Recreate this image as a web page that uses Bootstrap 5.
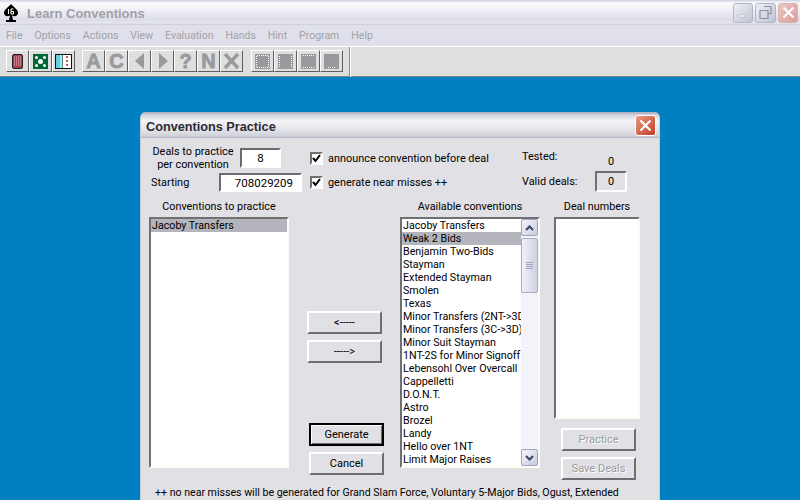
<!DOCTYPE html>
<html lang="en">
<head>
<meta charset="utf-8">
<title>Learn Conventions</title>
<link href="https://cdn.jsdelivr.net/npm/bootstrap@5.3.0/dist/css/bootstrap.min.css" rel="stylesheet">
<style>
html,body{height:500px;overflow:hidden;margin:0;background:#0080c0}
body{font-family:Roboto,"Liberation Sans",Arial,sans-serif;font-size:10.9px;color:#000;line-height:13px}
.app{width:800px;height:500px}
.titlebar{height:25px;background:linear-gradient(#cfd0e0 0,#fafafd 3px,#f3f3f8 8px,#dddde8 20px,#e6e6ee 23px,#c8c8d8 25px);padding:0 2px 0 1px}
.apptitle{font-family:"Liberation Sans",sans-serif;font-weight:700;font-size:13px;color:#a0a0a8;margin:2px 0 0 6px}
.winbtn{width:20px;height:20px;border:1px solid #b4b6c8;border-radius:3px;background:linear-gradient(135deg,#f0f1f6,#bfc2d2);margin-left:2px}
.winbtn.wide{width:21px}
.winbtn.cl{background:linear-gradient(135deg,#ecc4c0,#dc9c98);border-color:#d8b4b4}
.menubar{height:20px;background:#dfe0ea;color:#a2a2a8;padding-left:6px;gap:12px;font-size:10.5px}
.menuline{height:2px;background:#fff;border-top:1px solid #dfe0ea}
.toolbar{height:30px;background:#e0dfe0;border-bottom:1px solid #7d8588;padding-left:6px}
.toolgroup{margin-top:-1px}
.tb{width:23px;height:22px;background:#dfdfdf;border:1px solid;border-color:#fff #5f5f5f #5f5f5f #fff;display:flex;align-items:center;justify-content:center;font-family:"Liberation Sans",sans-serif;font-weight:700;font-size:20px;-webkit-text-stroke:.8px #9a9a9e;color:#9a9a9e;overflow:hidden;line-height:1}
.gapa{margin-left:7px}
.gapb{margin-left:8px}
.tsep{width:2px;height:30px;background:linear-gradient(90deg,#8a8a8a 50%,#fff 50%);margin-left:6px}
.desktop{height:423px;margin:0 2px 0 1px;background:#0080c0;position:relative}
.dlg{position:absolute;left:139px;top:35px;width:520px;height:400px;background:#e1e0e5;border:1px solid #c8cad8;border-top:0;border-radius:6px 6px 0 0;overflow:hidden}
.dlgtitle{height:26px;background:linear-gradient(#a8a9bc 0,#d2d3de 3px,#f4f4f8 9px,#e2e2e8 18px,#d2d2da 24px,#aeb0c0 26px);padding:0 3px 0 5px;font-family:"Liberation Sans",sans-serif;font-weight:700;font-size:12.7px;color:#2c2c34}
.dlgtitle>span{margin-top:5px}
.dlgx{width:21px;height:21px;border:1px solid #fff;border-radius:3px;background:linear-gradient(135deg,#e89a86,#c23c26);margin-top:1px}
.dlgbody{padding:9px 0 0 8px}
.toprow{height:53px}
.dealbox{width:88px;text-align:center}
.fld.form-control{border-radius:0;border:2px solid;border-color:#6c6c6c #fff #fff #6c6c6c;padding:0 3px;height:20px;font-size:11.5px;background:#fff;line-height:16px;color:#000;box-shadow:none}
.f8{width:41px;text-align:center;margin-left:3px}
.fstart{width:83px;text-align:right;padding-right:7px!important;height:19px!important}
.startlbl{margin-left:2px;width:68px}
.r1{height:22px}
.r2{height:19px;margin-top:4px}
.col1{width:161px}
.col2{width:212px;margin-top:-1px}
.xrow{height:24px;gap:5px}
.cb{width:13px;height:13px;border:2px solid;border-color:#707070 #fff #fff #707070;background:#fff;display:flex;align-items:center;justify-content:center;flex:none}
.stat{width:110px;padding-top:3px}
.statr{height:21px}
.slab{width:73px}
.val{width:32px;height:21px;border:2px solid;border-color:#707070 #fff #fff #707070;text-align:center;line-height:17px}
.v0{width:32px;text-align:center;margin-top:5px}
.heads{height:13px;text-align:center;font-size:10.8px}
.h1a{width:140px}
.h1b{width:140px;margin-left:111px}
.h1c{width:86px;margin-left:14px}
.main{height:264px;margin-top:4px}
.lbox.list-group{border-radius:0;border:2px solid;border-color:#707070 #fcfcf4 #fcfcf4 #707070;background:#fff;overflow:hidden;flex-wrap:nowrap}
.lbox .list-group-item{border:0;border-radius:0;padding:0 0 0 1px;background:transparent;color:#000;font-size:10.7px;line-height:13px;height:13px;white-space:nowrap;overflow:hidden}
.lbox .list-group-item.sel{background:#b4b4bd}
.left{width:140px;height:251px}
.mid{width:111px;height:251px;padding-left:18px}
.ab.btn,.sb.btn{width:75px;height:23px;border-radius:0;padding:0;background:#e1e0e5;font-size:11px;line-height:19px;border:2px solid;border-color:#fff #6e6e6e #6e6e6e #fff;color:#000;opacity:1;--bs-btn-disabled-opacity:1}
.ab.btn{margin-top:94px}
.ab.two.btn{margin-top:6px}
.sb.go.btn{margin:60px 0 6px 2px;border:2px solid #000;box-shadow:inset 1px 1px 0 #fff,inset -1px -1px 0 #6e6e6e}
.sb.can.btn{margin-left:2px}
.avail{width:140px;height:251px;padding-left:0}
.rows{width:121px;overflow:hidden;padding-top:0}
.sbar{width:17px;background:#f3f3fa}
.sbtn{width:17px;height:17px;border:1px solid #9ea3c0;border-radius:2px;background:linear-gradient(135deg,#f4f5fb,#c8cbe0);display:flex;align-items:center;justify-content:center}
.thumb{width:17px;height:55px;margin-top:2px;border:1px solid #a8aac4;border-radius:2px;background:linear-gradient(90deg,#f0f1f8,#cfd1e4);display:flex;align-items:center;justify-content:center}
.right{width:86px;margin-left:14px}
.dn{width:86px;height:202px}
.dis.sb.btn{margin-left:7px;color:#9c9c9c;text-shadow:1px 1px 0 #fff}
.dis1.sb.btn{margin-top:9px}
.dis2.sb.btn{margin-top:6px}
.foot{padding-left:6px;margin-top:5px;white-space:nowrap;font-size:10.6px}
</style>
</head>
<body>
<div class="app">
  <div class="titlebar d-flex align-items-center">
    <svg width="20" height="20" viewBox="0 0 20 20"><path d="M10 1C8 4 3 6 3 10c0 3 3 4 6 2.500L8 17H5v2h10v-2h-3l-1-4.500c3 1.500 6 .5 6-2.500 0-4-5-6-7-9z" fill="#000"/><rect x="6.500" y="5.500" width="7" height="6" fill="#000"/><path d="M7.500 6v5M10 6h2.500M10 6v5h2.500V8.500H10" stroke="#fff" stroke-width="1" fill="none"/></svg>
    <span class="apptitle flex-grow-1">Learn Conventions</span>
    <div class="winbtn d-flex align-items-center justify-content-center"><svg width="13" height="13" viewBox="0 0 13 13"><rect x="1" y="9" width="7" height="2" fill="#fff" stroke="#9a9cb0" stroke-width=".5"/></svg></div>
    <div class="winbtn wide d-flex align-items-center justify-content-center"><svg width="15" height="15" viewBox="0 0 15 15"><path d="M6 1.500h7v7h-3M2 5.500h8v8H2zM2 5.500h8" fill="none" stroke="#8d90a6" stroke-width="1.200"/></svg></div>
    <div class="winbtn cl d-flex align-items-center justify-content-center"><svg width="13" height="13" viewBox="0 0 13 13"><path d="M1.500 1.500l10 10M11.500 1.500l-10 10" stroke="#fff" stroke-width="2.200"/></svg></div>
  </div>
  <div class="menubar d-flex align-items-center">
    <span>File</span><span>Options</span><span>Actions</span><span>View</span><span>Evaluation</span><span>Hands</span><span>Hint</span><span>Program</span><span>Help</span>
  </div>
  <div class="menuline"></div>
  <div class="toolbar d-flex align-items-center">
    <div class="tb toolgroup"><svg width="11" height="15" viewBox="0 0 11 15"><rect x=".5" y=".5" width="10" height="14" rx="1.500" fill="#b03a50" stroke="#222"/><path d="M2 3h7M2 5h7M2 7h7M2 9h7M2 11h7" stroke="#e8b8c0" stroke-dasharray="1 1"/></svg></div>
    <div class="tb toolgroup"><svg width="15" height="15" viewBox="0 0 15 15"><rect width="15" height="15" fill="#063"/><circle cx="7.500" cy="7.500" r="2.500" fill="#fff"/><circle cx="3.500" cy="3.500" r="1.500" fill="#fff"/><circle cx="11.500" cy="3.500" r="1.500" fill="#fff"/><circle cx="3.500" cy="11.500" r="1.500" fill="#fff"/><circle cx="11.500" cy="11.500" r="1.500" fill="#fff"/></svg></div>
    <div class="tb toolgroup"><svg width="17" height="15" viewBox="0 0 17 15"><rect x=".5" y=".5" width="16" height="14" fill="#fff" stroke="#111"/><path d="M4 1v13M7.500 1v13" stroke="#111"/><rect x="1" y="1" width="3" height="13" fill="#6cd"/><rect x="4.500" y="1" width="3" height="13" fill="#9ee"/><path d="M11 3h2M12 2v2M11 7h2M12 6v2M11 11h2M12 10v2" stroke="#c22"/></svg></div>
    <div class="tb toolgroup gapa">A</div>
    <div class="tb toolgroup">C</div>
    <div class="tb toolgroup"><svg width="12" height="16" viewBox="0 0 12 16"><path d="M10 0v16L1 8z" fill="#9a9a9e"/></svg></div>
    <div class="tb toolgroup"><svg width="12" height="16" viewBox="0 0 12 16"><path d="M2 0v16l9-8z" fill="#9a9a9e"/></svg></div>
    <div class="tb toolgroup">?</div>
    <div class="tb toolgroup">N</div>
    <div class="tb toolgroup"><svg width="17" height="16" viewBox="0 0 17 16"><path d="M2 1l13 14M15 1L2 15" stroke="#9a9a9e" stroke-width="3.500"/></svg></div>
    <div class="tb toolgroup gapb"><svg width="15" height="15" viewBox="0 0 15 15"><rect width="15" height="15" fill="#9a9a9e"/><path d="M2 1.500h11M2 13.500h11M1.500 2v11M13.500 2v11" stroke="#fff" stroke-dasharray="1 1"/></svg></div>
    <div class="tb toolgroup"><svg width="15" height="15" viewBox="0 0 15 15"><rect width="15" height="15" fill="#9a9a9e"/><path d="M1.500 2v11M13.500 2v11" stroke="#fff" stroke-dasharray="1 1"/></svg></div>
    <div class="tb toolgroup"><svg width="15" height="15" viewBox="0 0 15 15"><rect width="15" height="15" fill="#9a9a9e"/><path d="M2 1.500h11M2 13.500h11" stroke="#fff" stroke-dasharray="1 1"/></svg></div>
    <div class="tb toolgroup"><svg width="15" height="15" viewBox="0 0 15 15"><rect width="15" height="15" fill="#9a9a9e"/><path d="M4 13.500h8" stroke="#fff" stroke-dasharray="1 1"/></svg></div>
    <div class="tsep"></div>
  </div>
  <div class="desktop">
    <div class="dlg">
      <div class="dlgtitle d-flex align-items-center justify-content-between">
        <span>Conventions Practice</span>
        <div class="dlgx d-flex align-items-center justify-content-center"><svg width="13" height="13" viewBox="0 0 13 13"><path d="M1.500 1.500l10 10M11.500 1.500l-10 10" stroke="#fff" stroke-width="2.200"/></svg></div>
      </div>
      <div class="dlgbody">
        <div class="toprow d-flex">
          <div class="col1">
            <div class="r1 d-flex align-items-center"><div class="dealbox">Deals to practice<br>per convention</div><input class="form-control fld f8" value="8" readonly></div>
            <div class="r2 d-flex align-items-center"><span class="startlbl">Starting</span><input class="form-control fld fstart" value="708029209" readonly></div>
          </div>
          <div class="col2">
            <div class="xrow d-flex align-items-center"><span class="cb"><svg width="9" height="9" viewBox="0 0 9 9"><path d="M1 4l2.500 3L8 1" fill="none" stroke="#000" stroke-width="2"/></svg></span><span>announce convention before deal</span></div>
            <div class="xrow d-flex align-items-center"><span class="cb"><svg width="9" height="9" viewBox="0 0 9 9"><path d="M1 4l2.500 3L8 1" fill="none" stroke="#000" stroke-width="2"/></svg></span><span>generate near misses ++</span></div>
          </div>
          <div class="stat">
            <div class="statr d-flex align-items-start"><span class="slab">Tested:</span><span class="v0">0</span></div>
            <div class="d-flex align-items-center"><span class="slab">Valid deals:</span><div class="val">0</div></div>
          </div>
        </div>
        <div class="heads d-flex">
          <div class="h1a">Conventions to practice</div>
          <div class="h1b">Available conventions</div>
          <div class="h1c">Deal numbers</div>
        </div>
        <div class="main d-flex">
          <div class="list-group lbox left"><div class="list-group-item sel">Jacoby Transfers</div></div>
          <div class="mid d-flex flex-column">
            <button class="btn ab">&lt;-----</button>
            <button class="btn ab two">-----&gt;</button>
            <button class="btn sb go">Generate</button>
            <button class="btn sb can">Cancel</button>
          </div>
          <div class="list-group lbox avail flex-row">
            <div class="rows">
              <div class="list-group-item">Jacoby Transfers</div>
              <div class="list-group-item sel">Weak 2 Bids</div>
              <div class="list-group-item">Benjamin Two-Bids</div>
              <div class="list-group-item">Stayman</div>
              <div class="list-group-item">Extended Stayman</div>
              <div class="list-group-item">Smolen</div>
              <div class="list-group-item">Texas</div>
              <div class="list-group-item">Minor Transfers (2NT-&gt;3D)</div>
              <div class="list-group-item">Minor Transfers (3C-&gt;3D)</div>
              <div class="list-group-item">Minor Suit Stayman</div>
              <div class="list-group-item">1NT-2S for Minor Signoff</div>
              <div class="list-group-item">Lebensohl Over Overcall</div>
              <div class="list-group-item">Cappelletti</div>
              <div class="list-group-item">D.O.N.T.</div>
              <div class="list-group-item">Astro</div>
              <div class="list-group-item">Brozel</div>
              <div class="list-group-item">Landy</div>
              <div class="list-group-item">Hello over 1NT</div>
              <div class="list-group-item">Limit Major Raises</div>
            </div>
            <div class="sbar d-flex flex-column">
              <div class="sbtn"><svg width="9" height="6" viewBox="0 0 9 6"><path d="M1 5l3.500-3.500L8 5" fill="none" stroke="#3c4468" stroke-width="2"/></svg></div>
              <div class="thumb"><svg width="7" height="8" viewBox="0 0 7 8"><path d="M0 .5h7M0 2.500h7M0 4.500h7M0 6.500h7" stroke="#9ea2c0"/></svg></div>
              <div class="flex-grow-1"></div>
              <div class="sbtn"><svg width="9" height="6" viewBox="0 0 9 6"><path d="M1 1l3.500 3.500L8 1" fill="none" stroke="#3c4468" stroke-width="2"/></svg></div>
            </div>
          </div>
          <div class="right d-flex flex-column">
            <div class="list-group lbox dn"></div>
            <button class="btn sb dis dis1" disabled>Practice</button>
            <button class="btn sb dis dis2" disabled>Save Deals</button>
          </div>
        </div>
        <div class="foot">++ no near misses will be generated for Grand Slam Force, Voluntary 5-Major Bids, Ogust, Extended</div>
      </div>
    </div>
  </div>
</div>
<script src="https://cdn.jsdelivr.net/npm/bootstrap@5.3.0/dist/js/bootstrap.bundle.min.js"></script>
</body>
</html>
